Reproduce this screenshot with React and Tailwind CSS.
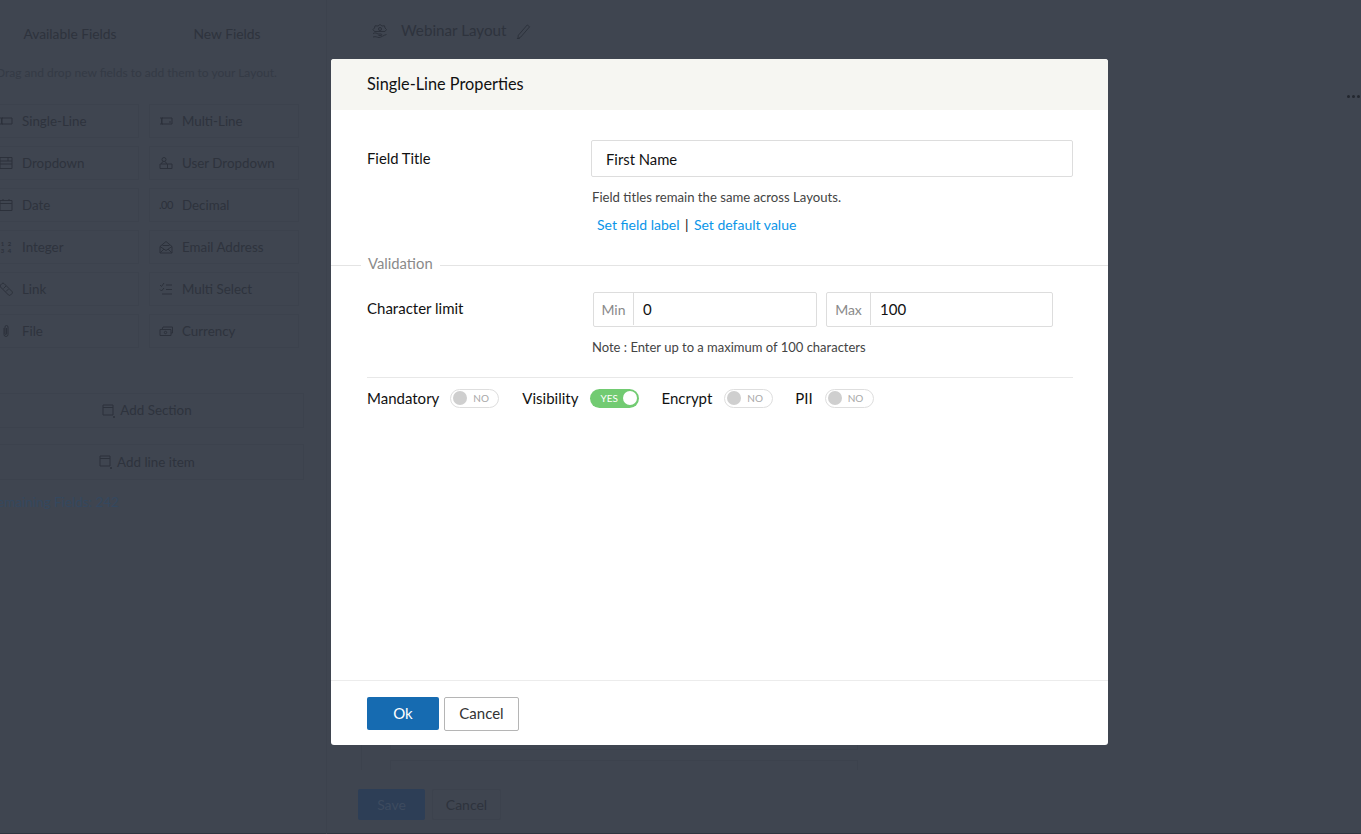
import React from "react";

const Ic = ({ children, className = "" }) => (
  <svg viewBox="0 0 14 14" className={`w-[14px] h-[14px] shrink-0 ${className}`} fill="none" stroke="#2c313b" strokeWidth="1">
    {children}
  </svg>
);

const icons = {
  single: <Ic><path d="M3 4h10v6H3zM1 4h3M1 10h3M2.500 4v6" /></Ic>,
  multi: <Ic><path d="M3 4h10v6H3zM1 4h3M1 10h3M2.500 4v6M10 8h2" /></Ic>,
  dropdown: <Ic><path d="M1 1.500h12v11H1zM1 5h12M1 8h12M9 1.500V5" /></Ic>,
  user: <Ic><circle cx="5" cy="3.500" r="2" /><path d="M2.500 8c0-1.500 1-2.500 2.500-2.500S7.500 6.500 7.500 8M1 8h12v4.500H1zM8.500 8v4.500" /></Ic>,
  date: <Ic><path d="M1 2.500h12v10H1zM1 5.500h12M4 1v2M10 1v2" /></Ic>,
  decimal: <span className="w-[14px] shrink-0 text-[11px] text-[#2c313b] tracking-[-0.5px]">.00</span>,
  integer: <span className="w-[14px] shrink-0 grid grid-cols-2 text-[6px] leading-[7px] text-[#2c313b] text-center font-bold"><span>1</span><span>2</span><span>3</span><span>4</span></span>,
  email: <Ic><path d="M1 6.500 7 1.500l6 5v6.500H1zM1 6.500l6 4 6-4M3.500 5.500h7M1 13l4-4M13 13 9 9" /></Ic>,
  link: <Ic><path d="M1.500 3 3 1.500a1.500 1.500 0 0 1 2 0l8 8a1.500 1.500 0 0 1 0 2L11.500 13a1.500 1.500 0 0 1-2 0l-8-8a1.400 1.400 0 0 1 0-2zM4.500 6.500 7 4M7 9.500 9.500 7" /></Ic>,
  select: <Ic><path d="m1 3 1.500 1.500L5 1M1 7.500l1.500 1.500L5 6M7 3h6M7 7.500h6M3 12h10" /></Ic>,
  file: <Ic><path d="M5 4v6.500a2 2 0 0 0 4 0V3a1.500 1.500 0 0 0-3 0v7a.8.8 0 0 0 1.500 0V4" /></Ic>,
  currency: <Ic><path d="M1 5.500h11v6H1zM3 5.500 4 3h9.500v6H12" /><circle cx="6.500" cy="8.500" r="1.200" /></Ic>,
};

const AddIcon = () => (
  <svg viewBox="0 0 14 14" className="w-[14px] h-[14px] shrink-0" fill="none" stroke="#2c313b" strokeWidth="1">
    <path d="M1 1h10v10H1zM1 3.500h10M12 12v2M11 13h2" />
  </svg>
);

const Cell = ({ icon, label }) => (
  <div className="h-[34px] border border-[#3c424d] flex items-center gap-[9px] pl-[9px] text-[13.350px] text-[#2e333d]">
    {icons[icon]}
    <span>{label}</span>
  </div>
);

const Toggle = ({ on }) =>
  on ? (
    <span className="w-[49px] h-[19px] rounded-full bg-[#72cb72] flex items-center justify-between pl-[10px] pr-[2px] text-[10px] text-white">
      <span>YES</span>
      <span className="w-[14px] h-[14px] rounded-full bg-white" />
    </span>
  ) : (
    <span className="w-[49px] h-[19px] rounded-full border border-[#dedede] bg-white flex items-center pl-[2px] gap-[6px] text-[10px] text-[#a8a8a8]">
      <span className="w-[14px] h-[14px] rounded-full bg-[#cfcfcf]" />
      <span>NO</span>
    </span>
  );

const left = [
  ["single", "Single-Line", "multi", "Multi-Line"],
  ["dropdown", "Dropdown", "user", "User Dropdown"],
  ["date", "Date", "decimal", "Decimal"],
  ["integer", "Integer", "email", "Email Address"],
  ["link", "Link", "select", "Multi Select"],
  ["file", "File", "currency", "Currency"],
];

export default function App() {
  return (
    <div className="relative w-[1361px] h-[834px] overflow-hidden bg-[#3f4550] shadow-[inset_0_-1px_0_#2f3540] flex font-['Lato','Open_Sans',sans-serif]">
      {/* Dimmed page: field palette */}
      <div className="w-[327px] shrink-0 border-r border-[#3c424d] h-full overflow-hidden">
        <div className="ml-[-13px] w-[318px] flex h-[52px] mt-[8px] text-[13.800px] text-[#2e333d]">
          <div className="w-[166px] flex items-center justify-center">Available Fields</div>
          <div className="w-[148px] flex items-center justify-center">New Fields</div>
        </div>
        <p className="ml-[-4px] mt-[4px] text-[12px] leading-[17px] whitespace-nowrap text-[#343a45]">Drag and drop new fields to add them to your Layout.</p>
        <div className="ml-[-11px] w-[310px] mt-[23px] grid grid-cols-[150px_150px] gap-x-[10px] gap-y-[8px]">
          {left.map((r) => (
            <React.Fragment key={r[1]}>
              <Cell icon={r[0]} label={r[1]} />
              <Cell icon={r[2]} label={r[3]} />
            </React.Fragment>
          ))}
        </div>
        <div className="ml-[-10px] w-[314px] mt-[45px] flex flex-col gap-[16px] text-[13.400px] text-[#2e333d]">
          <div className="h-[35px] border border-[#3c424d] flex items-center justify-center gap-[4px]"><AddIcon />Add Section</div>
          <div className="h-[36px] border border-[#3c424d] flex items-center justify-center gap-[4px]"><AddIcon />Add line item</div>
        </div>
        <p className="ml-[-11px] mt-[13px] text-[13.500px] leading-[18px] whitespace-nowrap text-[#34485f]">Remaining Fields: 242</p>
      </div>

      {/* Dimmed page: layout canvas */}
      <div className="flex-1 min-w-0 flex flex-col h-full">
        <div className="flex items-center h-[62px] pl-[45px] text-[15.200px] text-[#2e333d]">
          <svg viewBox="0 0 16 16" className="w-[16px] h-[16px]" fill="none" stroke="#2c313b" strokeWidth="1">
            <path d="M8 1.500 10 3l2.500-.2.500 2.200 1.500 1.500-1.500 2H2.500L1 6.500 2.500 5 3 2.800 6 3zM1 10.500c2-1 3.500-.5 5 .5h3c1 0 1 1.500 0 1.500H6.500M1 14c3-1 4 .5 6 .5s5-2.500 7.500-3" />
            <circle cx="8" cy="6" r="1.500" />
          </svg>
          <span className="ml-[13px] pb-[2px]">Webinar Layout</span>
          <svg viewBox="0 0 16 16" className="ml-[10px] w-[15px] h-[15px]" fill="none" stroke="#2c313b" strokeWidth="1">
            <path d="M12 1 14.500 3 5 14l-3 1.500.5-3.500zM1 15.500h3" />
          </svg>
        </div>
        <div className="flex-1 min-h-0 flex flex-col ml-[34px] w-[497px] border-l border-[#3c424d] pl-[28px]">
          <div className="flex-1 mb-[10px] border-b border-x border-[#3c424d]" />
          <div className="h-[10px] border-t border-x border-[#3c424d]" />
        </div>
        <div className="flex gap-[7px] pl-[31px] pt-[19px] pb-[14px] text-[14px]">
          <div className="w-[67px] h-[31px] bg-[#2d3e56] rounded-[2px] flex items-center justify-center text-[#3d4b5f]">Save</div>
          <div className="w-[69px] h-[31px] border border-[#3c424d] rounded-[2px] flex items-center justify-center text-[#2e333d]">Cancel</div>
        </div>
      </div>

      <div className="absolute right-[1px] top-[95px] flex gap-[2px]">
        <span className="w-[3px] h-[3px] rounded-full bg-[#23272f]" />
        <span className="w-[3px] h-[3px] rounded-full bg-[#23272f]" />
        <span className="w-[3px] h-[3px] rounded-full bg-[#23272f]" />
      </div>

      {/* Modal */}
      <div className="absolute left-[331px] top-[59px] w-[777px] h-[686px] bg-white rounded-[3px] overflow-hidden flex flex-col text-black">
        <div className="h-[51px] shrink-0 bg-[#f6f6f2] flex items-center pl-[36px] pb-[1px] text-[16.300px] text-[#111]">Single-Line Properties</div>

        <div className="flex-1 min-h-0 flex flex-col">
          <div className="flex pl-[36px] pt-[30px]">
            <label className="w-[224px] text-[14.800px] leading-[36px] h-[36px] text-[#111]">Field Title</label>
            <div className="w-[482px] h-[37px] border border-[#dddddd] rounded-[2px] flex items-center pl-[14px] pt-[1px] text-[14.800px] text-[#111]">First Name</div>
          </div>
          <p className="ml-[261px] mt-[11px] text-[13.150px] leading-[18px] text-[#444]">Field titles remain the same across Layouts.</p>
          <div className="ml-[266px] mt-[9px] flex items-center text-[14px] leading-[20px] text-[#0a95e8]">
            <span>Set field label</span>
            <span className="mx-[5.500px] text-[#111]">|</span>
            <span>Set default value</span>
          </div>

          <div className="mt-[20px] flex items-center h-[20px]">
            <div className="w-[30px] border-t border-[#e4e4e4]" />
            <span className="px-[7px] pb-[3px] text-[14.800px] text-[#8a8a8a]">Validation</span>
            <div className="flex-1 border-t border-[#e4e4e4]" />
          </div>

          <div className="flex pl-[36px] mt-[17px]">
            <label className="w-[226px] text-[15px] leading-[32px] text-[#111]">Character limit</label>
            <div className="w-[224px] h-[35px] border border-[#dddddd] rounded-[2px] flex items-center pb-[1px] text-[15px]">
              <span className="w-[40px] h-full flex items-center justify-center border-r border-[#dddddd] text-[14px] text-[#8a8a8a]">Min</span>
              <span className="pl-[9px] text-[#111]">0</span>
            </div>
            <div className="ml-[9px] w-[227px] h-[35px] border border-[#dddddd] rounded-[2px] flex items-center pb-[1px] text-[15px]">
              <span className="w-[44px] h-full flex items-center justify-center border-r border-[#dddddd] text-[14px] text-[#8a8a8a]">Max</span>
              <span className="pl-[9px] text-[#111]">100</span>
            </div>
          </div>
          <p className="ml-[261px] mt-[11px] text-[13px] leading-[18px] text-[#444]">Note : Enter up to a maximum of 100 characters</p>

          <div className="mx-[36px] w-[706px] mt-[21px] border-t border-[#e8e8e8]" />

          <div className="flex items-center pl-[36px] mt-[10px] text-[15px] leading-[20px] text-[#111]">
            <span>Mandatory</span>
            <span className="ml-[11px]"><Toggle /></span>
            <span className="ml-[23px]">Visibility</span>
            <span className="ml-[12px]"><Toggle on /></span>
            <span className="ml-[22px]">Encrypt</span>
            <span className="ml-[12px]"><Toggle /></span>
            <span className="ml-[22px]">PII</span>
            <span className="ml-[12px]"><Toggle /></span>
          </div>
        </div>

        <div className="h-[65px] shrink-0 border-t border-[#ececec] flex items-start gap-[5px] pl-[36px] pt-[16px] text-[15px]">
          <div className="w-[72px] h-[33px] rounded-[2px] bg-[#166bb1] text-white flex items-center justify-center">Ok</div>
          <div className="w-[75px] h-[34px] rounded-[2px] border-[1.500px] border-[#b5b5b5] text-[#333] flex items-center justify-center pb-[1px]">Cancel</div>
        </div>
      </div>
    </div>
  );
}
